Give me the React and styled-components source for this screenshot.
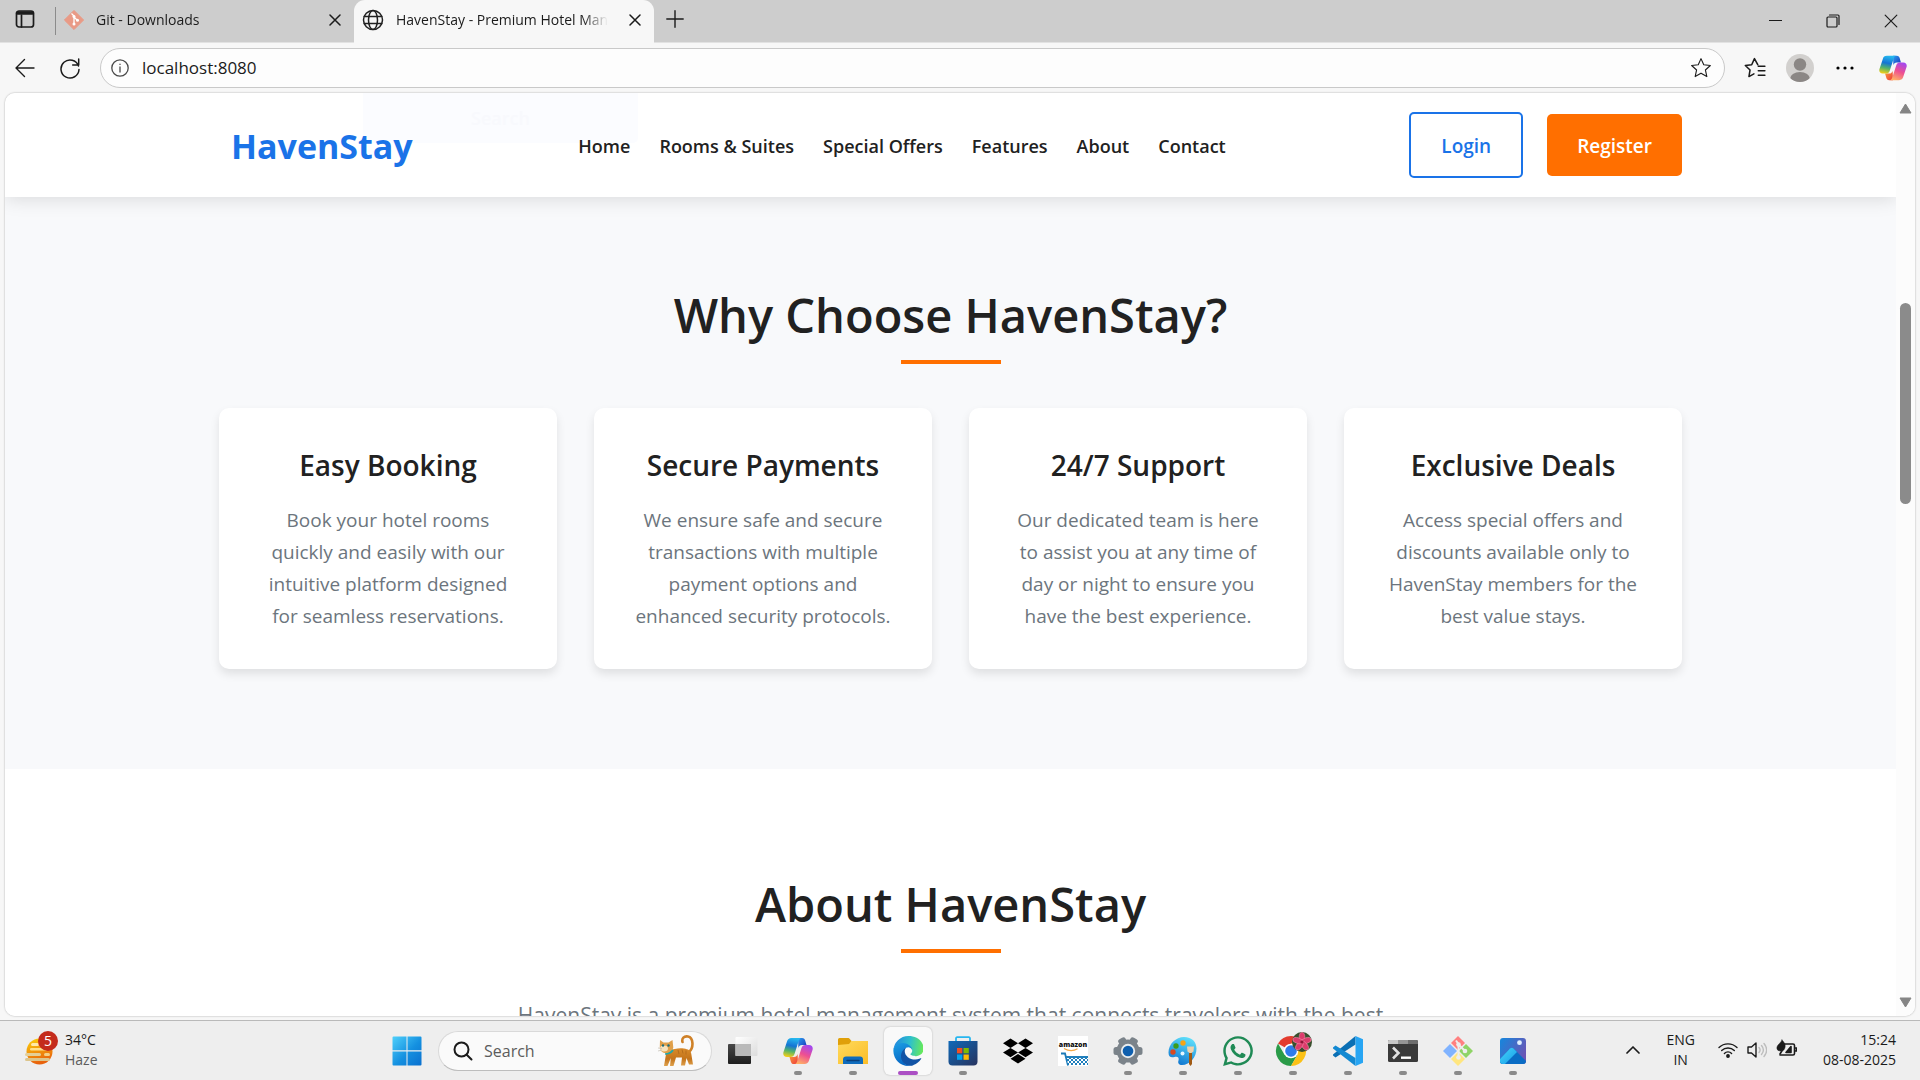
import React from "react";
import styled, { createGlobalStyle } from "styled-components";
import { FaWhatsapp } from "react-icons/fa";

const GlobalStyle = createGlobalStyle`
  *, *::before, *::after { box-sizing: border-box; }
  body { margin: 0; font-family: "Open Sans", "Noto Sans", sans-serif; color: #212121; overflow: hidden; }
  button, input { font: inherit; color: inherit; border: 0; background: none; padding: 0; margin: 0; outline: none; }
  h1, h2, h3, p { margin: 0; }
  a { color: inherit; text-decoration: none; }
  svg { display: block; flex: none; }
`;

/* ---------- window ---------- */
const Desktop = styled.div`
  height: 100vh;
  display: flex;
  flex-direction: column;
  background: #f7f7f7;
`;
const IconButton = styled.button`
  flex: none;
  width: ${(p) => p.$w || 30}px;
  height: ${(p) => p.$h || 30}px;
  display: grid;
  place-items: center;
  color: #1b1b1b;
`;
const TabStrip = styled.div`
  flex: none;
  height: 43px;
  display: flex;
  background: #cdcdcd;
  border-bottom: 1px solid #e2e2e2;
`;
const StripStart = styled.div`
  width: 56px;
  height: 38px;
  display: flex;
  align-items: center;
  padding-left: 10px;
  border-right: 1px solid #8b8b8b;
  border-image: linear-gradient(transparent 8px, #8b8b8b 8px, #8b8b8b 34px, transparent 34px) 1;
`;
const Tab = styled.div`
  width: ${(p) => (p.$active ? 300 : 298)}px;
  height: 43px;
  display: flex;
  align-items: center;
  gap: 12px;
  padding: 0 4px 4px 8px;
  border-radius: 11px 11px 0 0;
  background: ${(p) => (p.$active ? "#f7f7f7" : "transparent")};
`;
const TabTitle = styled.span`
  flex: 1;
  min-width: 0;
  overflow: hidden;
  white-space: nowrap;
  font-size: 14px;
  line-height: 20px;
  color: #1b1b1b;
  mask-image: linear-gradient(90deg, #000 88%, transparent);
`;
const WindowControls = styled.div`
  margin-left: auto;
  display: flex;
`;
const Toolbar = styled.div`
  flex: none;
  height: 50px;
  display: flex;
  align-items: center;
  padding: 0 9px 0 10px;
  gap: 15px;
`;
const AddressBar = styled.label`
  flex: 1;
  height: 40px;
  display: flex;
  align-items: center;
  gap: 13px;
  padding: 0 8px 0 10px;
  border: 1px solid #c9c9c9;
  border-radius: 20px;
  background: #fdfdfd;
  color: #4a4a4a;
`;
const AddressInput = styled.input`
  flex: 1;
  font-size: 17px;
  line-height: 24px;
  color: #1b1b1b;
`;
const ToolbarEnd = styled.div`
  display: flex;
  align-items: center;
  gap: 15px;
`;

/* ---------- page ---------- */
const Viewport = styled.div`
  flex: 1;
  min-height: 0;
  display: flex;
  margin: 0 5px 4px;
  border-radius: 10px;
  overflow: hidden;
  background: #fff;
  box-shadow: 0 0 2px rgba(0, 0, 0, 0.35);
`;
const Page = styled.div`
  flex: 1;
  min-width: 0;
  overflow: hidden;
`;
const Container = styled.div`
  max-width: 1463px;
  margin: 0 auto;
`;
const Header = styled.header`
  position: relative;
  z-index: 1;
  background: #fff;
  box-shadow: 0 2px 18px rgba(0, 0, 0, 0.13);
`;
const GhostSearch = styled.div`
  position: absolute;
  left: 358px;
  top: 0;
  width: 275px;
  height: 50px;
  display: grid;
  place-items: center;
  border-radius: 0 0 5px 5px;
  background: #fbfcff;
  color: #f8f9fd;
  font-size: 18px;
  font-weight: 600;
`;
const HeaderRow = styled(Container)`
  position: relative;
  height: 104px;
  display: flex;
  align-items: center;
  justify-content: space-between;
  padding-left: 12px;
`;
const Logo = styled.a`
  font-size: 34px;
  line-height: 50px;
  padding-top: 2px;
  font-weight: 700;
  color: #1a73e8;
`;
const Nav = styled.nav`
  display: flex;
  gap: 29px;
  padding: 2px 18px 0 0;
  font-size: 18px;
  line-height: 28px;
  font-weight: 600;
`;
const Actions = styled.div`
  display: flex;
  align-items: center;
  gap: 24px;
`;
const Button = styled.button`
  height: ${(p) => (p.$outline ? 66 : 62)}px;
  padding: 2px 30px 0;
  border: ${(p) => (p.$outline ? "2px solid #1a73e8" : "0")};
  border-radius: 5px;
  background: ${(p) => (p.$outline ? "#fff" : "#ff6f00")};
  color: ${(p) => (p.$outline ? "#1a73e8" : "#fff")};
  font-size: 19px;
  font-weight: 600;
`;
const Section = styled.section`
  padding: ${(p) => p.$top}px 0 100px;
  background: ${(p) => (p.$tinted ? "#f8f9fb" : "#fff")};
  text-align: center;
`;
const SectionTitle = styled.h2`
  font-size: 47px;
  line-height: 60px;
  font-weight: 600;
  &::after {
    content: "";
    display: block;
    width: 100px;
    height: 4px;
    margin: 15px auto 44px;
    background: #ff6f00;
  }
`;
const CardGrid = styled.div`
  display: grid;
  grid-template-columns: repeat(4, 1fr);
  gap: 37px;
`;
const Card = styled.article`
  padding: 39px 38px 37px;
  border-radius: 10px;
  background: #fff;
  box-shadow: 0 5px 10px rgba(0, 0, 0, 0.1);
`;
const CardTitle = styled.h3`
  font-size: 28px;
  line-height: 36px;
  font-weight: 600;
  margin-bottom: 21px;
`;
const CardText = styled.p`
  font-size: 19px;
  line-height: 32px;
  color: #6c757d;
`;
const Lead = styled.p`
  font-size: 21px;
  line-height: 36px;
  color: #6c757d;
`;
const ScrollBar = styled.div`
  flex: none;
  width: 19px;
  display: flex;
  flex-direction: column;
  align-items: center;
  justify-content: space-between;
  padding: 10px 0 8px;
  background: #fcfcfc;
`;
const Track = styled.div`
  flex: 1;
  padding-top: 189px;
`;
const Thumb = styled.div`
  width: 11px;
  height: 201px;
  border-radius: 6px;
  background: #8b8b8b;
`;

/* ---------- taskbar ---------- */
const Taskbar = styled.footer`
  flex: none;
  height: 60px;
  display: grid;
  grid-template-columns: 1fr auto 1fr;
  align-items: center;
  border-top: 1px solid #b9b9b9;
  background: #eee;
  font-size: 14px;
  line-height: 20px;
  color: #1b1b1b;
`;
const Weather = styled.button`
  justify-self: start;
  display: flex;
  align-items: center;
  gap: 7px;
  padding: 0 0 2px 24px;
  text-align: left;
`;
const Muted = styled.span`
  color: #5c5c5c;
`;
const Stack = styled.span`
  display: flex;
  flex-direction: column;
  align-items: ${(p) => p.$align || "flex-start"};
`;
const Dock = styled.div`
  display: flex;
  align-items: center;
  gap: 7px;
`;
const DockItem = styled.button`
  position: relative;
  width: 48px;
  height: 48px;
  display: grid;
  place-items: center;
  border-radius: 6px;
  background: ${(p) => (p.$active ? "#f9f9f9" : "transparent")};
  box-shadow: ${(p) => (p.$active ? "0 0 2px rgba(0,0,0,.25)" : "none")};
  &::after {
    content: "";
    display: ${(p) => (p.$running || p.$active ? "block" : "none")};
    position: absolute;
    bottom: 0;
    left: 50%;
    transform: translateX(-50%);
    width: ${(p) => (p.$active ? 20 : 8)}px;
    height: 4px;
    border-radius: 2px;
    background: ${(p) => (p.$active ? "#ab4fc4" : "#8a8a8a")};
  }
`;
const SearchBox = styled.label`
  width: 274px;
  height: 40px;
  display: flex;
  align-items: center;
  gap: 11px;
  padding: 0 16px 0 14px;
  border: 1px solid #d9d9d9;
  border-bottom-color: #bdbdbd;
  border-radius: 20px;
  background: #fafafa;
`;
const SearchInput = styled.input`
  flex: 1;
  min-width: 0;
  font-size: 16px;
  line-height: 24px;
  &::placeholder { color: #5c5c5c; opacity: 1; }
`;
const Tray = styled.div`
  justify-self: end;
  display: flex;
  align-items: center;
  padding: 0 24px 2px 0;
`;
const TrayButton = styled.button`
  display: flex;
  align-items: center;
  gap: 9px;
  margin-right: ${(p) => p.$after || 0}px;
`;

/* ---------- drawings ---------- */
const Line = ({ size = 20, box = 20, w = 1.4, children }) => (
  <svg width={size} height={size} viewBox={`0 0 ${box} ${box}`} fill="none" stroke="currentColor" strokeWidth={w} strokeLinecap="round" strokeLinejoin="round">{children}</svg>
);
const CloseIcon = ({ size = 12, w = 1.4 }) => <Line size={size} box={12} w={w}><path d="M1 1l10 10M11 1L1 11" /></Line>;

const Copilot = ({ size = 30, id }) => (
  <svg width={size} height={size} viewBox="0 0 30 30">
    <defs>
      <linearGradient id={id + "a"} x1="0.5" y1="0" x2="0.3" y2="1"><stop offset="0" stopColor="#25b7ee" /><stop offset=".4" stopColor="#1474d4" /><stop offset=".68" stopColor="#52b36a" /><stop offset="1" stopColor="#f6cf16" /></linearGradient>
      <linearGradient id={id + "b"} x1="0.7" y1="0" x2="0.3" y2="1"><stop offset="0" stopColor="#a348f0" /><stop offset=".5" stopColor="#ee4f91" /><stop offset="1" stopColor="#ffb066" /></linearGradient>
      <linearGradient id={id + "c"} x1="0" y1="0" x2="1" y2="1"><stop offset="0" stopColor="#2c9df0" /><stop offset="1" stopColor="#1733b8" /></linearGradient>
      <linearGradient id={id + "d"} x1="0" y1="0" x2="1" y2="1"><stop offset="0" stopColor="#f9a13c" /><stop offset="1" stopColor="#ee3a3c" /></linearGradient>
    </defs>
    <path d="M15 2h4c2 0 2.700 1 3.200 2.600L23.500 9h-4.500c-2 0-3 1-3.600 3z" fill={`url(#${id}c)`} />
    <path d="M15 28h-4c-2 0-2.700-1-3.200-2.600L6.500 21H11c2 0 3-1 3.600-3z" fill={`url(#${id}d)`} />
    <path d="M8.500 2H18c-1.500.6-2 2-2.500 3.500l-4 12.500c-.7 2-1.700 3-4 3H4c-3 0-4.300-2.300-3.500-5L4 5.500C4.700 3.200 6 2 8.500 2z" fill={`url(#${id}a)`} />
    <path d="M21.500 28H12c1.500-.6 2-2 2.500-3.500l4-12.500c.7-2 1.700-3 4-3H26c3 0 4.300 2.300 3.500 5L26 24.500c-.7 2.300-2 3.500-4.500 3.500z" fill={`url(#${id}b)`} />
  </svg>
);
const GitTab = () => (
  <svg width="20" height="20" viewBox="0 0 20 20">
    <path d="M10 .4L19.600 10 10 19.600.4 10z" fill="#e99a86" stroke="#e99a86" strokeLinejoin="round" />
    <path d="M7.500 3.500L10 6v8.500M10 7l3.500 3.500" stroke="#fff" strokeWidth="1.300" fill="none" />
    <circle cx="10" cy="6.500" r="1.500" fill="#fff" /><circle cx="10" cy="14" r="1.500" fill="#fff" /><circle cx="13.500" cy="10.300" r="1.500" fill="#fff" />
  </svg>
);
const Globe = () => <Line size={22} box={22} w={1.5}><circle cx="11" cy="11" r="9.500" /><ellipse cx="11" cy="11" rx="4.500" ry="9.500" /><path d="M2.300 7.500h17.400M2.300 14.500h17.400" /></Line>;
const Star = <path d="M10 1.500l2.500 5.600 6 .6-4.500 4.100 1.300 6L10 14.700 4.700 17.800 6 11.800 1.500 7.700l6-.6z" />;
const Avatar = () => (
  <svg width="28" height="28" viewBox="0 0 28 28">
    <clipPath id="av"><circle cx="14" cy="14" r="14" /></clipPath>
    <g clipPath="url(#av)"><rect width="28" height="28" fill="#d2d0ce" /><circle cx="14" cy="10.500" r="6.200" fill="#8b8785" /><ellipse cx="14" cy="25" rx="10" ry="7" fill="#8b8785" /></g>
  </svg>
);
const Haze = () => (
  <svg width="34" height="38" viewBox="0 0 34 38">
    <defs><linearGradient id="hz" x1="0" y1="0" x2="0.300" y2="1"><stop offset="0" stopColor="#fcd20a" /><stop offset="1" stopColor="#e8620c" /></linearGradient></defs>
    <circle cx="15.500" cy="20.500" r="13" fill="url(#hz)" />
    <rect x="7" y="12" width="8" height="3" rx="1.500" fill="#ffe9a8" /><rect x="6" y="17" width="17" height="2.600" rx="1.300" fill="#ffe08a" />
    <rect x="1" y="22" width="16" height="3" rx="1.500" fill="#e3cf98" /><rect x="20" y="22" width="6" height="3" rx="1.500" fill="#f3cf86" />
    <rect x="1" y="27" width="25" height="3" rx="1.500" fill="#dcc58c" />
    <circle cx="24" cy="10" r="10" fill="#c42b1c" />
    <text x="24" y="15" fontSize="14" fill="#fff" textAnchor="middle" fontFamily="Open Sans, sans-serif">5</text>
  </svg>
);
const Windows = () => (
  <svg width="30" height="30" viewBox="0 0 30 30">
    <defs><linearGradient id="wn" x1="0" y1="0" x2="1" y2="1"><stop offset="0" stopColor="#4fd0fb" /><stop offset=".55" stopColor="#1490e0" /><stop offset="1" stopColor="#0a70cf" /></linearGradient></defs>
    <path fill="url(#wn)" d="M1.500.5h13v13.800H.5V1.500a1 1 0 011-1zM15.500.5h13a1 1 0 011 1v12.800h-14zM.5 15.400h14v14h-13a1 1 0 01-1-1zM15.500 15.400h14v13a1 1 0 01-1 1h-13z" />
  </svg>
);
const Cat = () => (
  <svg width="38" height="32" viewBox="0 0 38 32">
    <defs><linearGradient id="ct" x1="0" y1="0" x2="0" y2="1"><stop offset="0" stopColor="#d98b2b" /><stop offset=".6" stopColor="#c4741b" /><stop offset="1" stopColor="#dfa24e" /></linearGradient></defs>
    <path d="M32 17c5-4 4.500-14.500-1-15.500-4-.7-6.500 2-5.500 5.500" fill="none" stroke="#cf8128" strokeWidth="2.600" strokeLinecap="round" />
    <path d="M12 15c5-1 10-2.500 15-1.500 4 .7 7 2 7.300 5.500l1.700 10.500h-4L29.500 23 28 30.500h-4l1-8h-6l-2.500 8.500H13l.8-8L10.500 31H7l2-12z" fill="url(#ct)" />
    <path d="M3 5l3.500 2.500h5L15.500 5l.8 7.500c-1 4-4 5.500-7 5.500-3.500 0-6.500-2-6.500-6z" fill="#e0a04a" />
    <ellipse cx="7" cy="13.500" rx="4" ry="3" fill="#f7e3bd" /><circle cx="6" cy="10.500" r="1.200" fill="#1f6f7c" /><circle cx="11.500" cy="10.500" r="1.200" fill="#1f6f7c" />
    <path d="M8 19c3 0 6-1 8-4" stroke="#1fa7a8" strokeWidth="1.700" fill="none" /><path d="M21 15l1 4M25 14.500l1 4M29 15.500l0 4" stroke="#b56d1c" strokeWidth="1" />
    <path d="M1 13l4 .5M1 16l4-1" stroke="#b8b1a5" strokeWidth=".6" />
  </svg>
);
const TaskView = () => (
  <svg width="32" height="30" viewBox="0 0 32 30">
    <defs><linearGradient id="tv" x1="0" y1="0" x2="0" y2="1"><stop offset="0" stopColor="#484848" /><stop offset="1" stopColor="#1d1d1d" /></linearGradient><linearGradient id="tw" x1="0" y1="0" x2="1" y2="1"><stop offset="0" stopColor="#fff" /><stop offset="1" stopColor="#dcdcdc" /></linearGradient></defs>
    <rect x="1" y="8" width="23" height="20" rx="1" fill="url(#tv)" /><rect x="8.500" y="1" width="22" height="19" rx="1" fill="url(#tw)" />
    <rect x="8.500" y="8" width="15.500" height="12" fill="#b9b9b9" />
  </svg>
);
const Folder = () => (
  <svg width="30" height="30" viewBox="0 0 30 30">
    <defs><linearGradient id="fo" x1="0" y1="0" x2="1" y2="1"><stop offset="0" stopColor="#ffda5c" /><stop offset="1" stopColor="#fbbd28" /></linearGradient></defs>
    <path d="M0 3.500A1.500 1.500 0 011.500 2h8.300c1 0 1.500.4 2 1L13.500 5v5H0z" fill="#e0a009" />
    <path d="M0 9l11-1 2.500-3H30v23H0z" fill="url(#fo)" />
    <path d="M5 28v-4.500a3 3 0 013-3h14a3 3 0 013 3V28z" fill="#0f6cbd" /><path d="M9 24.500h12" stroke="#0a3f7a" strokeWidth="1.400" strokeLinecap="round" />
  </svg>
);
const Edge = () => (
  <svg width="30" height="30" viewBox="0 0 256 256">
    <defs>
      <linearGradient id="e1" x1="0.100" y1="0.300" x2="1" y2="0.400"><stop offset="0" stopColor="#2390dd" /><stop offset=".5" stopColor="#2fc0cb" /><stop offset="1" stopColor="#67ea5a" /></linearGradient>
      <linearGradient id="e2" x1="0" y1="0" x2="0.300" y2="1"><stop offset="0" stopColor="#1ca1e6" /><stop offset="1" stopColor="#0867c4" /></linearGradient>
    </defs>
    <path d="M235 190a94 94 0 01-10 5 102 102 0 01-36 6c-47 0-89-33-89-74a32 32 0 0117-28c-43 2-54 47-54 73 0 74 68 82 83 82 8 0 20-2 27-5l1-1a128 128 0 0067-53 4 4 0 00-6-5z" fill="#1253a5" />
    <path d="M106 241a79 79 0 01-23-21 81 81 0 0133-121c3-1 8-4 16-4a32 32 0 0125 13 32 32 0 016 18c0-1 25-80-80-80C39 46 3 88 3 125a130 130 0 0012 56 128 128 0 00157 67 75 75 0 01-66-7z" fill="url(#e2)" />
    <path d="M152 149c-1 1-3 3-3 6 0 3 2 6 5 8 15 10 43 9 43 9a62 62 0 0032-9 65 65 0 0032-56c0-24-8-40-12-46C228 20 182 0 132 0A128 128 0 004 126c1-36 37-66 80-66 3 0 23 0 42 10a73 73 0 0131 29c6 10 7 24 7 29 0 5-3 13-8 19z" fill="url(#e1)" />
  </svg>
);
const Store = () => (
  <svg width="30" height="30" viewBox="0 0 30 30">
    <defs><linearGradient id="st" x1="0" y1="0" x2="1" y2="1"><stop offset="0" stopColor="#0f69b8" /><stop offset="1" stopColor="#27335e" /></linearGradient></defs>
    <path d="M8 7V2.500A1.200 1.200 0 019.200 1.200h11.600A1.200 1.200 0 0122 2.500V7" fill="none" stroke="#27b6ef" strokeWidth="1.800" />
    <path d="M.5 5h29v20.500a4 4 0 01-4 4h-21a4 4 0 01-4-4z" fill="url(#st)" />
    <path d="M9 12h5.300v5.300H9z" fill="#f25022" /><path d="M15.500 12h5.300v5.300h-5.300z" fill="#7fba00" /><path d="M9 18.500h5.300v5.300H9z" fill="#00a4ef" /><path d="M15.500 18.500h5.300v5.300h-5.300z" fill="#ffb900" />
  </svg>
);
const Dropbox = () => (
  <svg width="30" height="30" viewBox="0 0 30 30"><path d="M7.500 2.500L15 7.200l-7.500 4.700L0 7.200zM22.500 2.500L30 7.200l-7.500 4.700L15 7.200zM0 16.600l7.500-4.700 7.500 4.700-7.500 4.700zM22.500 11.900l7.500 4.700-7.500 4.700-7.500-4.700zM7.500 22.800l7.500-4.700 7.500 4.700-7.500 4.700z" /></svg>
);
const Amazon = () => (
  <svg width="30" height="30" viewBox="0 0 30 30">
    <defs><pattern id="am" width="4" height="4" patternUnits="userSpaceOnUse"><path d="M0 0l4 4M4 0L0 4" stroke="#fff" strokeWidth="1" /></pattern></defs>
    <rect width="30" height="30" fill="#fff" />
    <text x="15" y="11" fontSize="7" fontWeight="800" fill="#111" textAnchor="middle" fontFamily="Open Sans, sans-serif">amazon</text>
    <path d="M6 12.500c5 3 10 2.500 13.500.3" stroke="#f3a847" strokeWidth="1.200" fill="none" />
    <path d="M3 17.500h4l3 12" stroke="#1b7ab8" strokeWidth="1.800" fill="none" /><path d="M7.500 20H30v9H10z" fill="#1f7fbd" /><path d="M9 22H30v7H10z" fill="url(#am)" />
  </svg>
);
const Gear = () => (
  <svg width="30" height="30" viewBox="0 0 30 30">
    <g fill="#7b838a">
      {[0, 60, 120].map((r) => <rect key={r} x="11" y="0.500" width="8" height="29" rx="2.500" transform={`rotate(${r + 30} 15 15)`} />)}
      <circle cx="15" cy="15" r="11.500" />
    </g>
    <circle cx="15" cy="15" r="7.200" fill="#e9ecee" /><circle cx="15" cy="15" r="5.300" fill="#0f5fae" />
  </svg>
);
const Paint = () => (
  <svg width="30" height="30" viewBox="0 0 30 30">
    <defs><linearGradient id="pa" x1="0.700" y1="0" x2="0.300" y2="1"><stop offset="0" stopColor="#5fe0fb" /><stop offset="1" stopColor="#0d73cf" /></linearGradient></defs>
    <path d="M16 1c8 0 12.500 5 12.500 11.500C28.500 21 22 29 14 29c-3 0-4.500-2-3.500-4.500 1-3-1-4.500-4-3.500-3.500 1-6 0-6-4.500C.5 8 8 1 16 1z" fill="url(#pa)" />
    <circle cx="8" cy="10" r="2.700" fill="#3b9c1c" /><circle cx="15" cy="7" r="2.700" fill="#f6a414" /><circle cx="5" cy="16" r="2.700" fill="#d8491f" /><circle cx="14.500" cy="17.500" r="2" fill="#e4f6ff" />
    <path d="M21 15h3v13l-1.500 2-1.500-2z" fill="#a05a14" /><path d="M19 10.500h7l-.5 5-2 1.500h-2l-2-1.500z" fill="#ecd2ae" />
  </svg>
);
const Chrome = () => (
  <svg width="38" height="38" viewBox="0 0 38 38">
    <path d="M17 19L4 11.500A15 15 0 0130 11.500H17z" fill="#e33b2e" />
    <path d="M17 19l-6.500 3.700L4 11.500A15 15 0 0017 34l6.500-11.300z" fill="#2a9b48" />
    <path d="M17 11.500h13A15 15 0 0117 34l6.500-11.300z" fill="#fbc116" />
    <circle cx="17" cy="19" r="7.300" fill="#fff" /><circle cx="17" cy="19" r="5.800" fill="#2f7bea" />
    <circle cx="28" cy="10" r="10" fill="#39502e" />
    {[0, 72, 144, 216, 288].map((r) => <ellipse key={r} cx="28" cy="5.500" rx="2.800" ry="5" fill="#dc3c6c" stroke="#f08aa8" strokeWidth=".6" transform={`rotate(${r} 28 10)`} />)}
    <circle cx="28" cy="10" r="1.600" fill="#8f1638" />
  </svg>
);
const VSCode = () => (
  <svg width="30" height="30" viewBox="0 0 30 30">
    <path d="M22.500 0v8.500L2.500 21.500 0 19.500v-1z" fill="#0a6fb4" />
    <path d="M0 11.500l2.500-2L22.500 22v8L0 12.500z" fill="#1389d2" />
    <path d="M22.500 0L30 3.300v23.400L22.500 30z" fill="#27a5f3" />
  </svg>
);
const Terminal = () => (
  <svg width="30" height="30" viewBox="0 0 30 30">
    <rect y="4" width="30" height="22" rx="1.500" fill="#3a3a3a" /><path d="M1.500 4H10v4H0V5.500A1.500 1.500 0 011.500 4z" fill="#c9c9c9" /><path d="M10 4h10v4H10z" fill="#959595" /><path d="M20 4h8.500A1.500 1.500 0 0130 5.500V8H20z" fill="#6d6d6d" />
    <path d="M5 11.500l5.500 5.500L5 22.500" stroke="#e2e2e2" strokeWidth="2.600" fill="none" /><path d="M13 21.700h10" stroke="#fff" strokeWidth="2.400" />
  </svg>
);
const GitColor = () => (
  <svg width="30" height="30" viewBox="0 0 30 30">
    <path d="M15 0l7 7-7 7-7-7z" fill="#ff8080" /><path d="M23 8l7 7-7 7-7-7z" fill="#8fd466" /><path d="M7 8l7 7-7 7-7-7z" fill="#80b3ff" /><path d="M15 16l7 7-7 7-7-7z" fill="#ffe680" />
    <path d="M13 4.500l2.500 3.500v13M16 9l6 6" stroke="#eee" strokeWidth="2" fill="none" /><circle cx="15.500" cy="8.500" r="2.300" fill="#eee" /><circle cx="15.500" cy="21.500" r="2.300" fill="#eee" /><circle cx="22" cy="15" r="2.300" fill="#eee" />
  </svg>
);
const Photos = () => (
  <svg width="26" height="26" viewBox="0 0 26 26">
    <defs><linearGradient id="ph" x1="0" y1="0" x2="1" y2="0.600"><stop offset="0" stopColor="#1487dd" /><stop offset="1" stopColor="#6b55b5" /></linearGradient><linearGradient id="pi" x1="0" y1="0" x2="1" y2="1"><stop offset="0" stopColor="#48d5fb" /><stop offset="1" stopColor="#149be6" /></linearGradient><clipPath id="pc"><rect width="26" height="26" rx="3" /></clipPath></defs>
    <g clipPath="url(#pc)"><rect width="26" height="26" fill="url(#ph)" /><path d="M-1 22L10 10.500c1-1 2.500-1 3.500 0L27 24v4H-1z" fill="#0a6cc4" /><path d="M-1 22L10 10.500c1-1 2.500-1 3.500 0L17 14 4 27h-5z" fill="url(#pi)" /><circle cx="19.500" cy="4.700" r="2.400" fill="#dff0ff" /></g>
  </svg>
);
const WhatsApp = () => <FaWhatsapp size={34} color="#1f8a55" />;
const DockCopilot = () => <Copilot id="dock" />;

const apps = [
  { name: "Task view", icon: TaskView }, { name: "Copilot", icon: DockCopilot, running: true },
  { name: "File Explorer", icon: Folder, running: true }, { name: "Microsoft Edge", icon: Edge, active: true },
  { name: "Microsoft Store", icon: Store, running: true }, { name: "Dropbox", icon: Dropbox },
  { name: "Amazon", icon: Amazon }, { name: "Settings", icon: Gear, running: true },
  { name: "Paint", icon: Paint, running: true }, { name: "WhatsApp", icon: WhatsApp, running: true },
  { name: "Chrome", icon: Chrome, running: true }, { name: "VS Code", icon: VSCode, running: true },
  { name: "Terminal", icon: Terminal, running: true }, { name: "Git", icon: GitColor, running: true },
  { name: "Photos", icon: Photos, running: true },
];
const links = ["Home", "Rooms & Suites", "Special Offers", "Features", "About", "Contact"];
const features = [
  ["Easy Booking", "Book your hotel rooms quickly and easily with our intuitive platform designed for seamless reservations."],
  ["Secure Payments", "We ensure safe and secure transactions with multiple payment options and enhanced security protocols."],
  ["24/7 Support", "Our dedicated team is here to assist you at any time of day or night to ensure you have the best experience."],
  ["Exclusive Deals", "Access special offers and discounts available only to HavenStay members for the best value stays."],
];

function BrowserChrome() {
  return (
    <>
      <TabStrip>
        <StripStart><IconButton aria-label="Tab actions"><Line size={20} w={1.7}><rect x="1.500" y="2" width="17" height="16" rx="2.500" /><path d="M6.500 6v12" /><path d="M2.500 4h15" strokeWidth="3.500" /></Line></IconButton></StripStart>
        <Tab><GitTab /><TabTitle>Git - Downloads</TabTitle><IconButton aria-label="Close tab"><CloseIcon w={1.5} /></IconButton></Tab>
        <Tab $active><Globe /><TabTitle>HavenStay - Premium Hotel Management</TabTitle><IconButton aria-label="Close tab"><CloseIcon w={1.5} /></IconButton></Tab>
        <IconButton $w={42} $h={38} aria-label="New tab"><Line size={18} box={18} w={1.4}><path d="M9 .8v16.400M.8 9h16.400" /></Line></IconButton>
        <WindowControls>
          <IconButton $w={58} $h={42} aria-label="Minimize"><Line size={13} box={13} w={1}><path d="M0 5.500h13" /></Line></IconButton>
          <IconButton $w={58} $h={42} aria-label="Restore"><Line size={14} box={14} w={1.2}><rect x="1" y="3" width="10" height="10" rx="1" /><path d="M3.500 1H12a1 1 0 011 1v8.500" /></Line></IconButton>
          <IconButton $w={58} $h={42} aria-label="Close"><CloseIcon size={14} w={1} /></IconButton>
        </WindowControls>
      </TabStrip>
      <Toolbar>
        <IconButton aria-label="Back"><Line size={20} w={1.4}><path d="M19 10H1.500M9.500 1.500L1 10l8.500 8.500" /></Line></IconButton>
        <IconButton aria-label="Refresh"><Line size={22} box={22} w={1.5}><path d="M19.500 9A9 9 0 1020 12.500M19.700 2v6h-6" /></Line></IconButton>
        <AddressBar>
          <Line size={18} box={18} w={1.3}><circle cx="9" cy="9" r="8.200" /><path d="M9 8v5M9 5.200v.2" /></Line>
          <AddressInput aria-label="Address" defaultValue="localhost:8080" />
          <IconButton aria-label="Favorite this page"><Line size={22} w={1}>{Star}</Line></IconButton>
        </AddressBar>
        <ToolbarEnd>
          <IconButton aria-label="Favorites"><Line size={22} w={1.4}><path d="M12.500 7L9.500 1.500 7 7 1.200 7.700l4.300 4.100-1 6 4.500-2.500M13 8.500h6M13 12.500h6M13 16.500h6" /></Line></IconButton>
          <IconButton aria-label="Profile"><Avatar /></IconButton>
          <IconButton aria-label="More"><svg width="18" height="4" viewBox="0 0 18 4"><circle cx="2" cy="2" r="1.600" /><circle cx="9" cy="2" r="1.600" /><circle cx="16" cy="2" r="1.600" /></svg></IconButton>
          <IconButton $w={36} aria-label="Copilot"><Copilot size={28} id="bar" /></IconButton>
        </ToolbarEnd>
      </Toolbar>
    </>
  );
}

export default function App() {
  return (
    <Desktop>
      <GlobalStyle />
      <BrowserChrome />
      <Viewport>
        <Page>
          <Header>
            <GhostSearch>Search</GhostSearch>
            <HeaderRow>
              <Logo href="#">HavenStay</Logo>
              <Nav>{links.map((l) => <a key={l} href="#">{l}</a>)}</Nav>
              <Actions><Button $outline>Login</Button><Button>Register</Button></Actions>
            </HeaderRow>
          </Header>
          <Section $tinted $top={88}>
            <Container>
              <SectionTitle>Why Choose HavenStay?</SectionTitle>
              <CardGrid>{features.map(([t, d]) => <Card key={t}><CardTitle>{t}</CardTitle><CardText>{d}</CardText></Card>)}</CardGrid>
            </Container>
          </Section>
          <Section $top={105}>
            <Container>
              <SectionTitle>About HavenStay</SectionTitle>
              <Lead>HavenStay is a premium hotel management system that connects travelers with the best</Lead>
            </Container>
          </Section>
        </Page>
        <ScrollBar>
          <svg width="13" height="11" viewBox="0 0 13 11"><path d="M6.500 1L12 10H1z" fill="#858585" stroke="#858585" strokeLinejoin="round" /></svg>
          <Track><Thumb /></Track>
          <svg width="13" height="11" viewBox="0 0 13 11"><path d="M6.500 10L12 1H1z" fill="#858585" stroke="#858585" strokeLinejoin="round" /></svg>
        </ScrollBar>
      </Viewport>
      <Taskbar>
        <Weather><Haze /><Stack><span>34°C</span><Muted>Haze</Muted></Stack></Weather>
        <Dock>
          <DockItem aria-label="Start"><Windows /></DockItem>
          <SearchBox>
            <Line size={20} w={2}><circle cx="8.500" cy="8.500" r="7" /><path d="M13.700 13.700L18.500 18.500" /></Line>
            <SearchInput aria-label="Search" placeholder="Search" />
            <Cat />
          </SearchBox>
          {apps.map(({ name, icon: Icon, running, active }) => <DockItem key={name} aria-label={name} $running={running} $active={active}><Icon /></DockItem>)}
        </Dock>
        <Tray>
          <TrayButton $after={26} aria-label="Hidden icons"><Line size={14} box={14} w={1.7}><path d="M1 10l6-6 6 6" /></Line></TrayButton>
          <TrayButton $after={23}><Stack $align="center"><span>ENG</span><span>IN</span></Stack></TrayButton>
          <TrayButton $after={26} aria-label="Network, volume and battery">
            <Line size={20} w={1.4}><path d="M1 7.500a13 13 0 0118 0M3.700 10.500a9 9 0 0112.600 0M6.400 13.400a5 5 0 017.200 0" /><circle cx="10" cy="16" r="1.200" fill="currentColor" /></Line>
            <Line size={20} w={1.4}><path d="M1 7h3.500L9 3v14l-4.500-4H1z" /><path d="M12 7.500c1.300 1.500 1.300 3.500 0 5M14.500 5.500c2.300 2.700 2.300 6.300 0 9M17 3.500c3.300 4 3.300 9 0 13" stroke="#bdbdbd" /></Line>
            <Line size={21} box={21} w={1.6}><path d="M8 5h9a1.500 1.500 0 011.500 1.500v8A1.500 1.500 0 0117 16H4M19 9h1.500v3H19" /><path d="M10 13.500l5-6v6z" fill="currentColor" /><path d="M6 1c3 3 3.500 5 3 7.500C8.500 11 7 12 4.500 12 2 12 .5 10.500 1 8c.5-2.500 4-4 5-7z" fill="currentColor" strokeWidth=".5" /><path d="M4 15l3-5" /></Line>
          </TrayButton>
          <TrayButton><Stack $align="flex-end"><span>15:24</span><span>08-08-2025</span></Stack></TrayButton>
        </Tray>
      </Taskbar>
    </Desktop>
  );
}
